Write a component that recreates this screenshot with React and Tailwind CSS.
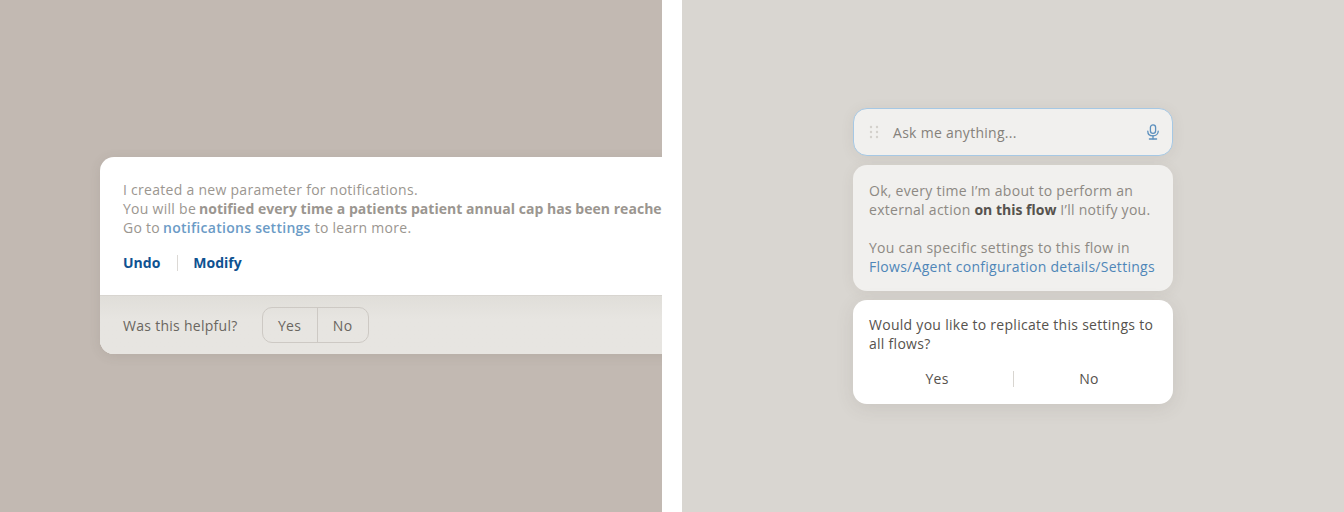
import React from 'react'

const font = { fontFamily: '"Open Sans", sans-serif' }

const DragHandle = () => (
    <svg width="10" height="14" viewBox="0 0 10 14" className="shrink-0 text-[#d3d0cb]" fill="currentColor">
        <circle cx="2" cy="2" r="1.2" />
        <circle cx="8" cy="2" r="1.2" />
        <circle cx="2" cy="7" r="1.2" />
        <circle cx="8" cy="7" r="1.2" />
        <circle cx="2" cy="12" r="1.2" />
        <circle cx="8" cy="12" r="1.2" />
    </svg>
)

const MicIcon = () => (
    <svg width="14" height="16" viewBox="0 0 14 16" fill="none" stroke="#5b8fbd" strokeWidth="1.3" strokeLinecap="round" className="shrink-0">
        <rect x="4.4" y="0.9" width="5.2" height="8.4" rx="2.6" />
        <path d="M1.8 7.2c0 3 2.2 4.6 5.2 4.6s5.2-1.6 5.2-4.6" />
        <path d="M7 11.8v3" />
        <path d="M3.4 15h7.2" />
    </svg>
)

const App = () => {
    return (
        <div className="flex h-[512px] w-[1344px] overflow-hidden bg-white text-[14px] leading-[19px] tracking-[0.28px]" style={font}>

            {/* LEFT PANEL */}
            <div className="flex w-[662px] shrink-0 items-center overflow-hidden bg-[#c2b9b2] pb-[1px] pl-[100px]">
                <div className="w-[700px] shrink-0 overflow-hidden rounded-[14px] bg-white shadow-[0_2px_12px_rgba(90,80,70,0.12)]">
                    <div className="h-[138px] px-[23px] pt-[23px]">
                        <p className="whitespace-nowrap text-[#9b9690]">I created a new parameter for notifications.</p>
                        <p className="whitespace-nowrap text-[#9b9690]">
                            You will be <b className="-ml-[1px] font-bold tracking-[0.03px]">notified every time a patients patient annual cap has been reached</b>
                        </p>
                        <p className="whitespace-nowrap text-[#9b9690]">
                            Go to <span className="-ml-[1px] font-semibold text-[#6b9bc6]">notifications settings</span> to learn more.
                        </p>
                        <div className="mt-[16px] flex items-center font-bold tracking-normal text-[#0f5291]">
                            <span>Undo</span>
                            <span className="mx-[17px] h-[16px] w-px bg-[#dcd9d5]" />
                            <span className="-ml-[2px]">Modify</span>
                        </div>
                    </div>
                    <div className="flex h-[59px] items-center border-t border-[#d8d5d0] bg-[#e7e5e1] bg-gradient-to-b from-[#e0ded9] to-[#e7e5e1] to-[40%] px-[23px]">
                        <span className="text-[#6a6660]">Was this helpful?</span>
                        <div className="ml-[24px] flex h-[36px] overflow-hidden rounded-[10px] border border-[#cdc9c4] text-[#6a6660]">
                            <span className="flex w-[55px] items-center justify-center border-r border-[#cdc9c4]">Yes</span>
                            <span className="flex w-[50px] items-center justify-center">No</span>
                        </div>
                    </div>
                </div>
            </div>

            {/* RIGHT PANEL */}
            <div className="ml-[20px] flex flex-1 items-center justify-center bg-[#d9d6d1]">
                <div className="flex w-[320px] flex-col gap-[9px]">

                    <div className="flex h-[48px] items-center rounded-[14px] border border-[#a6c8e4] bg-[#f1f0ee] pl-[15px] pr-[12px] shadow-[0_2px_14px_rgba(90,80,70,0.08)]">
                        <DragHandle />
                        <span className="ml-[14px] flex-1 text-[#85817b]">Ask me anything...</span>
                        <MicIcon />
                    </div>

                    <div className="h-[126px] rounded-[14px] bg-[#f1f0ee] px-[16px] pt-[16px] text-[#8d8983] shadow-[0_2px_14px_rgba(90,80,70,0.08)]">
                        <p>Ok, every time I’m about to perform an</p>
                        <p>external action <b className="font-bold tracking-normal text-[#56524d]">on this flow</b> I’ll notify you.</p>
                        <p className="mt-[19px]">You can specific settings to this flow in</p>
                        <p className="whitespace-nowrap text-[#4f86b8]">Flows/Agent configuration details/Settings</p>
                    </div>

                    <div className="h-[104px] rounded-[14px] bg-white px-[16px] pt-[15px] text-[#56524d] shadow-[0_4px_18px_rgba(90,80,70,0.12)]">
                        <p>Would you like to replicate this settings to all flows?</p>
                        <div className="mt-[16px] flex items-center">
                            <span className="flex-1 pr-[8px] text-center">Yes</span>
                            <span className="h-[16px] w-px bg-[#d8d5d0]" />
                            <span className="flex-1 pl-[7px] text-center">No</span>
                        </div>
                    </div>

                </div>
            </div>
        </div>
    )
}

export default App
